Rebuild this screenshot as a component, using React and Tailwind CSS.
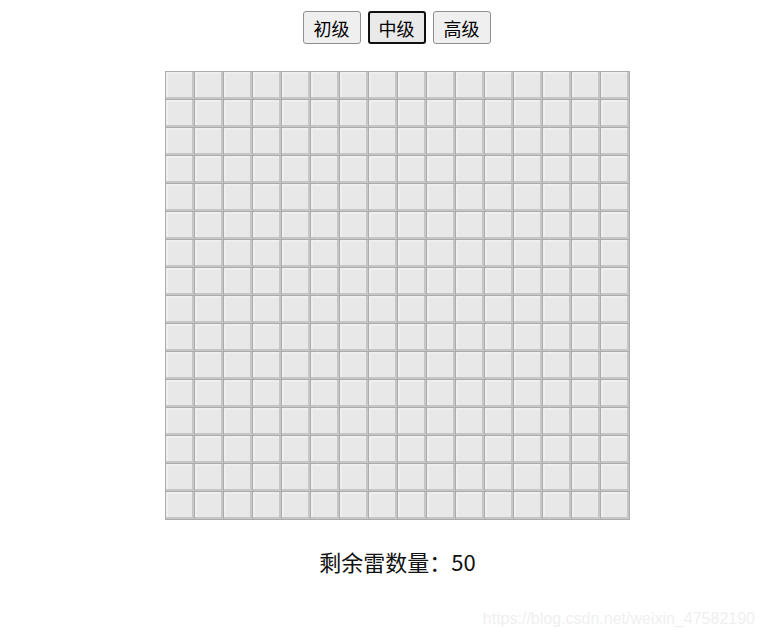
import { useState } from "react";

const LEVELS = [
  { name: "初级", size: 9, mines: 10 },
  { name: "中级", size: 16, mines: 50 },
  { name: "高级", size: 16, mines: 50 },
];

export default function App() {
  const [level, setLevel] = useState(1);
  const { size, mines } = LEVELS[level];
  const cells = Array.from({ length: size * size });

  return (
    <div className="relative w-[764px] h-[638px] bg-white overflow-hidden" style={{ fontFamily: '"Noto Sans CJK SC", "Liberation Sans", sans-serif' }}>
      <div className="flex flex-col items-center pl-[31px] pt-[11px]">
        <div className="flex gap-[7px] -translate-x-px">
          {LEVELS.map((l, i) => (
            <button
              key={l.name}
              onClick={() => setLevel(i)}
              className={
                "w-[58px] h-[33px] rounded-[3px] text-[18px] leading-none text-black flex items-center justify-center " +
                (i === level
                  ? "border-2 border-[#101010] bg-[#e9e9e9]"
                  : "border border-[#8f8f8f] bg-[#efefef]")
              }
            >
              {l.name}
            </button>
          ))}
        </div>

        <div
          className="mt-[27px] grid border-l border-t border-[#acacac]"
          style={{ gridTemplateColumns: `repeat(${size}, 29px)` }}
        >
          {cells.map((_, i) => (
            <div
              key={i}
              className="w-[29px] h-[28px] border-r border-b border-[#acacac] bg-[#e8e8e8] shadow-[inset_-2px_-2px_0_#c6c6c6,inset_2px_2px_0_#efefef]"
            />
          ))}
        </div>

        <div className="mt-[26px] text-[22px] leading-[30px] text-[#111]">
          剩余雷数量：{mines}
        </div>
      </div>

      <div
        className="absolute right-[9px] bottom-[9px] text-[16px] leading-[20px] text-[#efefef]"
        style={{ fontFamily: '"Liberation Sans", Arial, sans-serif' }}
      >
        https://blog.csdn.net/weixin_47582190
      </div>
    </div>
  );
}
